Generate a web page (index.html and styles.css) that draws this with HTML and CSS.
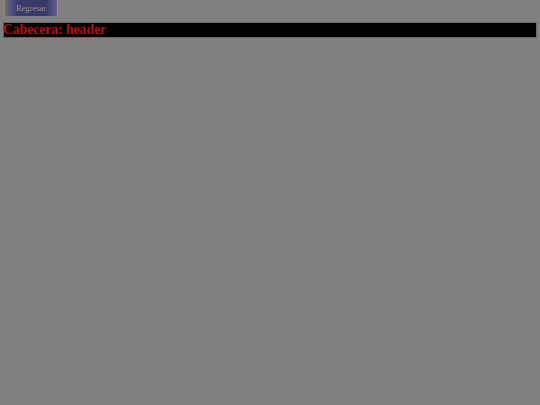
FILE: index.html
```html
<!DOCTYPE html>
<html>
<head>
<meta charset="utf-8">
<link rel="stylesheet" href="styles.css">
</head>
<body>
<div class="top">
  <button class="back">Regresar</button>
</div>
<header class="cabecera">Cabecera: header</header>
</body>
</html>
```
FILE: styles.css
```css
html, body {
  margin: 0;
  padding: 0;
  background: #808080;
  height: 100%;
}
body {
  font-family: "Liberation Serif", "Times New Roman", serif;
}
.top {
  padding-left: 4px;
  height: 16px;
}
.back {
  display: block;
  width: 54px;
  height: 16px;
  margin: 0;
  padding: 0;
  border: none;
  border-left: 1px solid #9a8866;
  border-right: 1px solid #a48c5c;
  background: linear-gradient(to right, #6a6a88 0%, #3c3c6c 22%, #36366a 78%, #626284 100%);
  color: #a0907e;
  font-family: "Liberation Serif", "Times New Roman", serif;
  font-size: 8.5px;
  line-height: 16px;
  text-align: center;
}
.cabecera {
  display: block;
  margin: 6px 3px 0 3px;
  height: 16px;
  box-sizing: border-box;
  border: 1px solid #666666;
  background: #000;
  color: #b80e0e;
  font-weight: bold;
  font-size: 13.6px;
  line-height: 14px;
  text-indent: -1px;
}
```
